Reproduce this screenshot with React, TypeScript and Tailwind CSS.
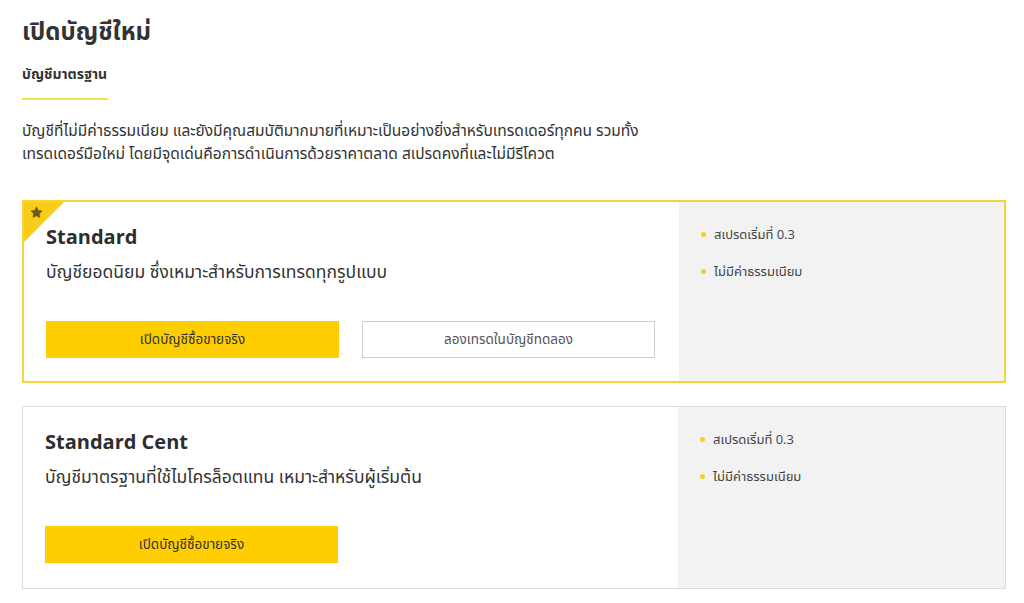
import { Star } from "lucide-react";

const font = { fontFamily: '"Open Sans", "Noto Sans", "Noto Sans Thai", "DejaVu Sans", sans-serif' };

type Plan = {
  name: string;
  description: string;
  featured?: boolean;
  demo?: boolean;
};

const plans: Plan[] = [
  {
    name: "Standard",
    description: "บัญชียอดนิยม ซึ่งเหมาะสำหรับการเทรดทุกรูปแบบ",
    featured: true,
    demo: true,
  },
  {
    name: "Standard Cent",
    description: "บัญชีมาตรฐานที่ใช้ไมโครล็อตแทน เหมาะสำหรับผู้เริ่มต้น",
  },
];

const features = ["สเปรดเริ่มที่ 0.3", "ไม่มีค่าธรรมเนียม"];

function PlanCard({ plan }: { plan: Plan }) {
  return (
    <div
      className={
        plan.featured
          ? "relative flex h-[183px] border-2 border-[#f5d43a] bg-white"
          : "relative flex h-[183px] border border-[#dcdcdc] bg-white"
      }
    >
      {plan.featured && (
        <div className="absolute left-0 top-0 h-[40px] w-[40px] bg-[#f8cc1b] [clip-path:polygon(0_0,100%_0,0_100%)]">
          <Star className="absolute left-[6px] top-[4px] h-[13px] w-[13px] fill-[#6e5b17] text-[#6e5b17]" strokeWidth={1} />
        </div>
      )}
      <div className="flex w-[655px] flex-col pl-[22px] pt-[20px]">
        <h3 className="text-[20px] font-bold leading-[30px] text-[#2d2d2d]">{plan.name}</h3>
        <p className="mt-[6px] text-[17.5px] leading-[26px] text-[#333]">{plan.description}</p>
        <div className="mt-[37px] flex gap-[23px]">
          <button className="h-[37px] w-[293px] bg-[#ffce00] text-[13.5px] text-[#333]">เปิดบัญชีซื้อขายจริง</button>
          {plan.demo && (
            <button className="h-[37px] w-[293px] border border-[#cfcfcf] bg-white text-[13.5px] text-[#555]">
              ลองเทรดในบัญชีทดลอง
            </button>
          )}
        </div>
      </div>
      <div className="flex flex-1 flex-col gap-[15px] bg-[#f2f2f2] pl-[22px] pt-[21px]">
        {features.map((f) => (
          <div key={f} className="flex items-center gap-[8px] text-[13px] leading-[22px] text-[#444]">
            <span className="h-[5px] w-[5px] rounded-full bg-[#f5cf1e]" />
            {f}
          </div>
        ))}
      </div>
    </div>
  );
}

export default function App() {
  return (
    <div style={font} className="min-h-screen bg-white px-[22px] pt-[14px] text-[#333]">
      <h1 className="text-[24px] font-bold leading-[34px] text-[#333]">เปิดบัญชีใหม่</h1>
      <div className="mt-[16px] text-[14px] font-bold leading-[20px] text-[#333]">บัญชีมาตรฐาน</div>
      <div className="mt-[14px] h-[2px] w-[86px] bg-[#f3e04a]" />
      <p className="mt-[19px] text-[15.5px] leading-[23px] text-[#333]">
        บัญชีที่ไม่มีค่าธรรมเนียม และยังมีคุณสมบัติมากมายที่เหมาะเป็นอย่างยิ่งสำหรับเทรดเดอร์ทุกคน รวมทั้ง
        <br />
        เทรดเดอร์มือใหม่ โดยมีจุดเด่นคือการดำเนินการด้วยราคาตลาด สเปรดคงที่และไม่มีรีโควต
      </p>
      <div className="mt-[35px] flex w-[984px] flex-col gap-[23px]">
        {plans.map((p) => (
          <PlanCard key={p.name} plan={p} />
        ))}
      </div>
    </div>
  );
}
